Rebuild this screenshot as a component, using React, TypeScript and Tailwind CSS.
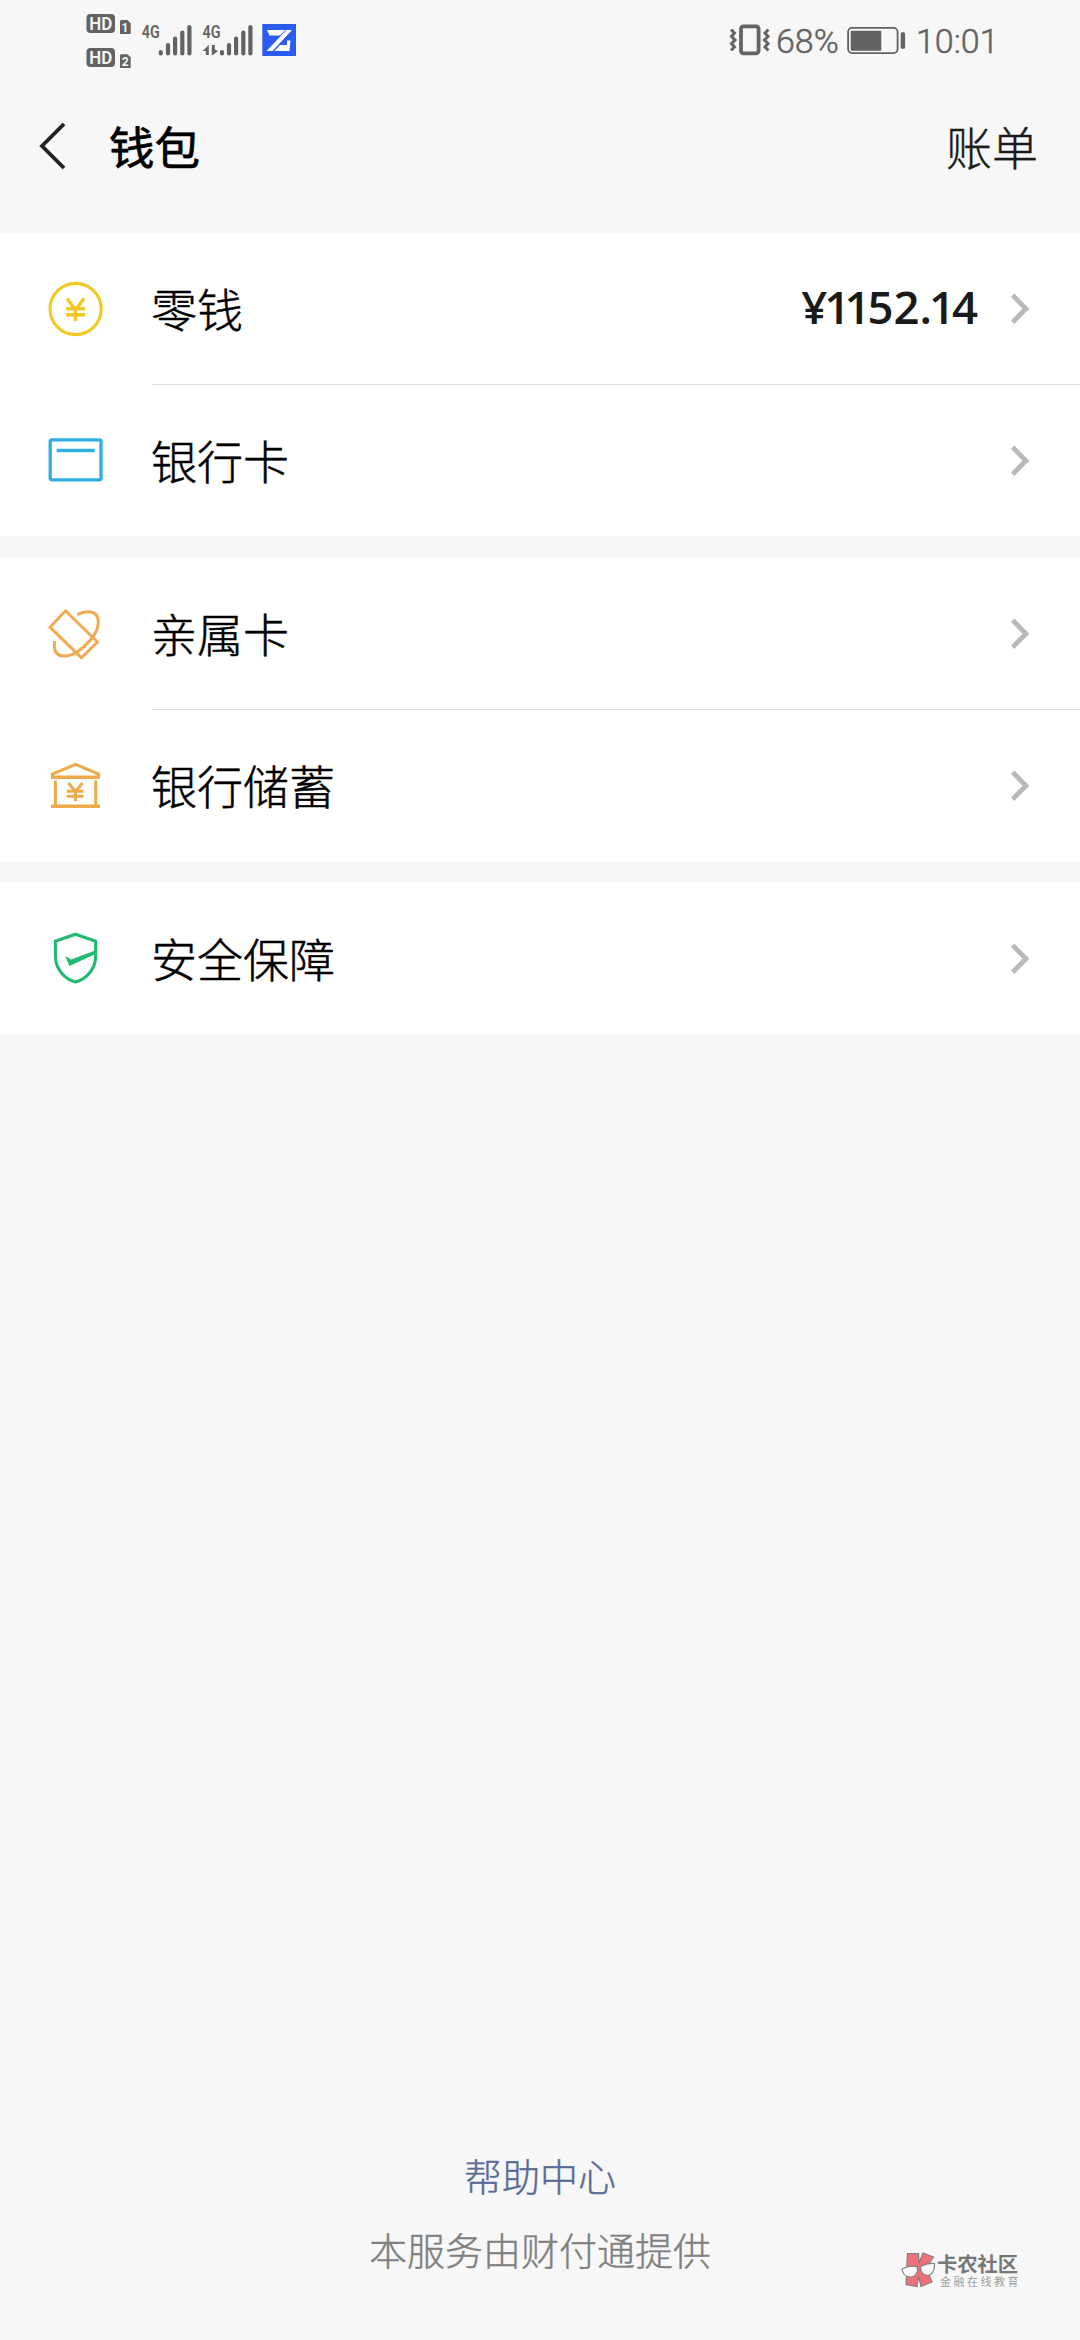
import React from 'react';

interface WalletItem {
  label: string;
  icon: React.ReactNode;
  amount?: string;
}

function BalanceIcon() {
  return (
    <svg width="56" height="56" viewBox="0 0 56 56" fill="none" stroke="#f0c926" strokeWidth="3.1">
      <circle cx="27.6" cy="28" r="25.6" />
      <path d="M19 17.5L27.5 29L36 17.5M18 27.8H37M18 33.8H37M27.5 27.5V40" strokeWidth="3.4" />
    </svg>
  );
}

function BankCardIcon() {
  return (
    <svg width="56" height="56" viewBox="0 0 56 56" fill="none" stroke="#30aee3" strokeWidth="3.3">
      <rect x="2.2" y="7.8" width="50.8" height="40" rx="1.5" />
      <path d="M8.7 18.5H46.7" />
    </svg>
  );
}

function FamilyCardIcon() {
  return (
    <svg width="56" height="56" viewBox="0 0 56 56" fill="none" stroke="#efaa52" strokeWidth="3" strokeLinejoin="round">
      <path d="M17.5 4.7L49.5 36L33.5 51.8L2 21.2Z" />
      <path d="M29.3 8.6C38 4 50.3 4 50.3 15.5C50.3 27 40 38 30.5 45C21 51.5 7.5 53 6.5 41.5C6.3 39 6.4 37 6.9 35" />
      <path d="M44.5 31.5L28.5 47" strokeWidth="2" />
    </svg>
  );
}

function SavingsIcon() {
  return (
    <svg width="56" height="56" viewBox="0 0 56 56" fill="none" stroke="#ecaa4a" strokeWidth="3">
      <path d="M4.4 20V17L27.5 7.3L50.6 17V20" />
      <path d="M3 20.2H52M3 49.2H52" strokeWidth="3.4" />
      <path d="M7.4 23.5V49M47.7 23.5V49" />
      <path d="M20.5 26L27.5 34.5L34.5 26M18.7 34.2H35.5M18.7 39.3H35.5M27.5 34V44.3" />
    </svg>
  );
}

function ShieldIcon() {
  return (
    <svg width="56" height="56" viewBox="0 0 56 56" fill="none" stroke="#22ba72" strokeWidth="3.1">
      <path d="M27.5 4.2L47.6 11.2V26.5C47.6 39 38 49.5 27.5 52C17 49.5 7.4 39 7.4 26.5V11.2Z" />
      <path d="M17.2 26L23.2 29.6L48.5 20V23.6L21.4 36Z" fill="#22ba72" stroke="none" />
    </svg>
  );
}

const groups: WalletItem[][] = [
  [
    { label: '零钱', icon: <BalanceIcon />, amount: '¥1152.14' },
    { label: '银行卡', icon: <BankCardIcon /> },
  ],
  [
    { label: '亲属卡', icon: <FamilyCardIcon /> },
    { label: '银行储蓄', icon: <SavingsIcon /> },
  ],
  [{ label: '安全保障', icon: <ShieldIcon /> }],
];

function SignalIcons() {
  return (
    <svg width="212" height="60" viewBox="86 10 212 60" fill="#636363" fontFamily="Roboto, sans-serif">
      {/* HD badges, one per SIM */}
      <rect x="86.5" y="14" width="28.5" height="19" rx="4" />
      <rect x="86.5" y="48" width="28.5" height="19" rx="4" />
      <g fill="#f7f7f7" fontSize="18" fontWeight="600">
        <text x="89.3" y="30" textLength="23" lengthAdjust="spacingAndGlyphs">HD</text>
        <text x="89.3" y="64" textLength="23" lengthAdjust="spacingAndGlyphs">HD</text>
      </g>
      <path d="M121 20H127.5L130.7 23.5V34H120V21ZM121 54.3H127.5L130.7 57.5V68H120V55.3Z" />
      <g fill="#f7f7f7" fontSize="12" fontWeight="700" textAnchor="middle">
        <text x="125" y="32">1</text>
        <text x="125.3" y="65.8">2</text>
      </g>

      <g fontSize="18" fontWeight="600">
        <text x="141.8" y="38" textLength="18" lengthAdjust="spacingAndGlyphs">4G</text>
        <text x="202.6" y="38" textLength="18" lengthAdjust="spacingAndGlyphs">4G</text>
      </g>
      <g stroke="#636363" strokeWidth="4.2" strokeLinecap="round">
        <path d="M160.8 52.2V53.4M168 45V53.4M175.1 38.5V53.4M182.3 32.5V53.4M189.4 27V53.4" />
        <path d="M222 52.2V53.4M229 45V53.4M236.1 38.5V53.4M243.3 32.5V53.4M250.4 27V53.4" />
      </g>
      <path d="M208.8 45V55H205.8V51H202.6ZM211.8 45H214.8V49.5L218 51L212.8 55H211.8Z" />

      <rect x="262.3" y="24" width="33.7" height="32" fill="#2b5cf0" />
      <path d="M267 30H285.5L280 35.5H269.5ZM286.5 30H292L272.5 51H266.5ZM280 45H287V40.5H290.5L289.5 51H274.5Z" fill="#fff" />
    </svg>
  );
}

function StatusBar() {
  return (
    <div className="flex h-20 items-start pl-[86px] pt-[10px] text-[#636363]">
      <SignalIcons />
      <svg className="ml-[431px] mt-[13px]" width="42" height="33" viewBox="729 23 42 33" fill="none" stroke="#636363">
        <rect x="741" y="26.3" width="17.6" height="27" rx="2.5" strokeWidth="3.8" />
        <path d="M731 29.5L734.5 33L731.5 36.5L735 40L731.5 43.5L734.5 47L731 50.5" strokeWidth="3" />
        <path d="M768.4 29.5L765 33L768 36.5L764.5 40L768 43.5L765 47L768.4 50.5" strokeWidth="3" />
      </svg>
      <span className="ml-[5px] mt-[11px] w-[71px] font-[Roboto] text-[34px] leading-[40px] font-light [-webkit-text-stroke:0.5px_#636363]">68%</span>
      <svg className="mt-4" width="60" height="29" viewBox="847 26 60 29" fill="none">
        <rect x="848.1" y="27.9" width="49.5" height="25.2" rx="4" stroke="#636363" strokeWidth="1.8" />
        <rect x="850.7" y="30.7" width="30.6" height="20" rx="1" fill="#636363" />
        <rect x="900.7" y="32.3" width="4.4" height="16.4" rx="1.5" fill="#636363" />
      </svg>
      <span className="ml-[9px] mt-[11px] font-[Roboto] text-[34px] leading-[40px] font-light [-webkit-text-stroke:0.5px_#636363]">10:01</span>
    </div>
  );
}

// Tightens the space on each side of the narrow "1"
function kern(ch: string, next?: string) {
  if (ch === '1' && next === '1') return 'tracking-[-6px]';
  if (ch === '1' || next === '1') return 'tracking-[-3px]';
  return 'tracking-normal';
}

function Amount({ value }: { value: string }) {
  return (
    <span className="ml-auto mr-[33px] pb-[3px] font-['Open_Sans'] text-[45.5px] leading-none font-semibold text-[#1a1a1a]">
      {value.split('').map((ch, i) => (
        <span key={i} className={kern(ch, value[i + 1])}>{ch}</span>
      ))}
    </span>
  );
}

function WalletRow({ item, divider }: { item: WalletItem; divider: boolean }) {
  return (
    <div className="flex items-center pl-12">
      <div className="-mt-px w-14 shrink-0">{item.icon}</div>
      <div className={`ml-12 flex flex-1 items-center pr-[49px] ${divider ? 'h-[152px] border-b border-[#dedede]' : 'h-[151px]'}`}>
        <span className="-ml-px pb-[3px] text-[46px] leading-none font-light text-black [-webkit-text-stroke:0.5px_#000]">{item.label}</span>
        {item.amount && <Amount value={item.amount} />}
        <svg
          className={item.amount ? '' : 'ml-auto'}
          width="20"
          height="32"
          viewBox="0 0 20 32"
          fill="none"
          stroke="#b9b9b9"
          strokeWidth="4.8"
        >
          <path d="M1.6 2.2L15 15.7L1.6 29.2" />
        </svg>
      </div>
    </div>
  );
}

function Watermark() {
  return (
    <div className="absolute top-[2251px] left-[901px] flex items-start">
      <svg width="36" height="38" viewBox="0 0 36 38" stroke="#808080" strokeWidth="1.2">
        <path d="M6.5 2.5H17.5L18 12L22 2L32.5 6L25 17L31 31L20 35.5L17.5 25L16 35.5L5 33.5Z" fill="#f2707a" />
        <path d="M1 18C6 15 12 14.5 16.5 16C17.5 22 14 26 9.5 26C5 26 1.5 23 1 18Z" fill="#fafafa" />
        <path d="M19.5 15.5C24 13 29 12 33.5 12.5C34 19 31 24 27 24.5C22.5 24.5 19.5 21 19.5 15.5Z" fill="#fafafa" />
      </svg>
      <div className="flex flex-col">
        <span className="text-[20.3px] leading-[24px] font-bold text-[#777]">卡农社区</span>
        <span className="ml-[3px] text-[11px] leading-[13px] tracking-[2.5px] text-[#a0a0a0]">金融在线教育</span>
      </div>
    </div>
  );
}

export default function App() {
  return (
    <div className="relative flex h-[2340px] w-[1080px] flex-col overflow-hidden bg-[#f7f7f7] font-['Noto_Sans_CJK_SC',sans-serif]">
      <StatusBar />

      {/* Header */}
      <header className="flex h-[153px] items-start pt-[43px] pl-[38px] pr-[42px]">
        <svg width="30" height="46" viewBox="0 0 30 46" fill="none" stroke="#222" strokeWidth="3.8">
          <path d="M26 1L4 23L26 45" />
        </svg>
        <h1 className="-mt-px ml-[41px] text-[45.5px] leading-[46px] font-normal text-black [-webkit-text-stroke:0.7px_#000]">钱包</h1>
        <span className="-mt-px ml-auto text-[46px] leading-[46px] font-light text-[#1a1a1a] [-webkit-text-stroke:0.4px_#1a1a1a]">账单</span>
      </header>

      <main className="flex flex-col gap-[22px]">
        {groups.map((group, i) => (
          <section key={i} className="bg-white">
            {group.map((item, j) => (
              <WalletRow key={item.label} item={item} divider={j < group.length - 1} />
            ))}
          </section>
        ))}
      </main>

      {/* Footer */}
      <footer className="mt-auto flex flex-col items-center gap-[36px] pb-[72px] text-[38px] leading-[38px] font-light">
        <a className="text-[#576b95] [-webkit-text-stroke:0.4px_#576b95]">帮助中心</a>
        <p className="text-[#7f7f7f] [-webkit-text-stroke:0.4px_#7f7f7f]">本服务由财付通提供</p>
      </footer>

      <Watermark />
    </div>
  );
}
